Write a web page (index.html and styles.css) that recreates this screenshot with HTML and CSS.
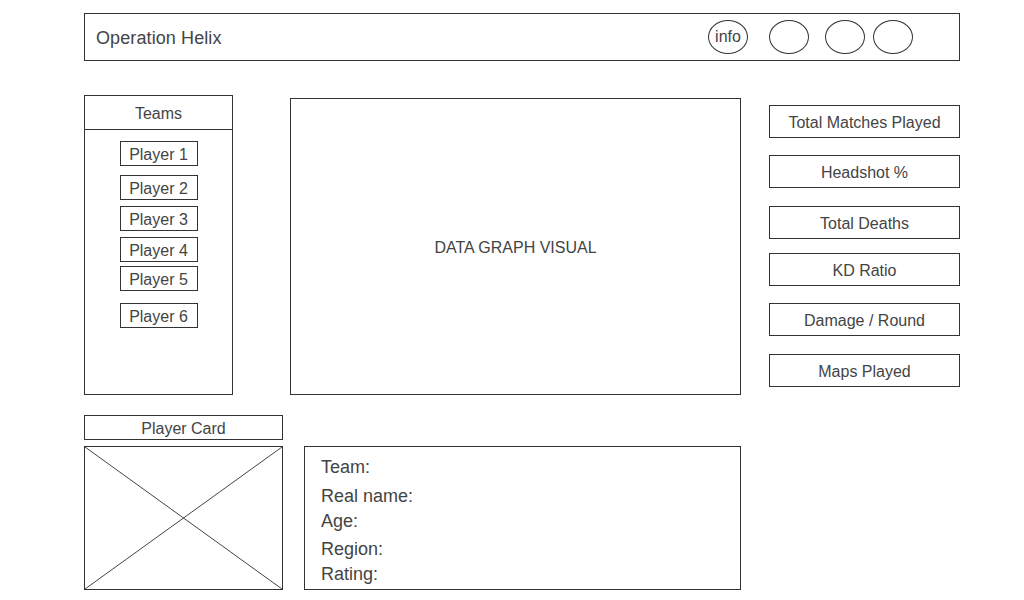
FILE: index.html
```html
<!DOCTYPE html>
<html lang="en">
<head>
<meta charset="utf-8">
<title>Operation Helix</title>
<link rel="stylesheet" href="styles.css">
</head>
<body>
<div class="page">
  <header class="topbar">
    <div class="title">Operation Helix</div>
    <div class="circles">
      <span class="circle c1">info</span>
      <span class="circle c2"></span>
      <span class="circle c3"></span>
      <span class="circle c4"></span>
    </div>
  </header>

  <main class="main-row">
    <section class="teams">
      <div class="teams-head">Teams</div>
      <div class="players">
        <div class="player p1">Player 1</div>
        <div class="player p2">Player 2</div>
        <div class="player p3">Player 3</div>
        <div class="player p4">Player 4</div>
        <div class="player p5">Player 5</div>
        <div class="player p6">Player 6</div>
      </div>
    </section>

    <section class="graph">DATA GRAPH VISUAL</section>

    <section class="stats">
      <div class="stat s1">Total Matches Played</div>
      <div class="stat s2">Headshot %</div>
      <div class="stat s3">Total Deaths</div>
      <div class="stat s4">KD Ratio</div>
      <div class="stat s5">Damage / Round</div>
      <div class="stat s6">Maps Played</div>
    </section>
  </main>

  <section class="bottom-row">
    <div class="card-col">
      <div class="card-label">Player Card</div>
      <div class="card-image">
        <svg class="xsvg" viewBox="0 0 197 142" preserveAspectRatio="none">
          <line x1="0" y1="0" x2="197" y2="142" stroke="#444" stroke-width="1"/>
          <line x1="197" y1="0" x2="0" y2="142" stroke="#444" stroke-width="1"/>
        </svg>
      </div>
    </div>
    <div class="info-box">
      <div class="info-line l1">Team:</div>
      <div class="info-line l2">Real name:</div>
      <div class="info-line l3">Age:</div>
      <div class="info-line l4">Region:</div>
      <div class="info-line l5">Rating:</div>
    </div>
  </section>
</div>
</body>
</html>
```

FILE: styles.css
```css
* { box-sizing: border-box; }

html, body {
  margin: 0;
  padding: 0;
  background: #ffffff;
}

body {
  font-family: "Liberation Sans", Arial, Helvetica, sans-serif;
  color: #444444;
  width: 1024px;
  height: 600px;
  overflow: hidden;
}

.page {
  padding: 13px 0 0 84px;
}

/* header */
.topbar {
  width: 876px;
  height: 48px;
  border: 1px solid #333333;
  display: flex;
  align-items: center;
  padding-left: 11px;
}

.title {
  flex: 1;
  font-size: 18px;
  line-height: 20px;
  margin-top: 2px;
  letter-spacing: 0.1px;
}

.circles {
  display: flex;
  align-items: center;
  margin-right: 46px;
}

.circle {
  width: 40px;
  height: 34px;
  border: 1px solid #333333;
  border-radius: 50%;
  display: flex;
  align-items: center;
  justify-content: center;
  font-size: 16px;
  color: #444444;
}

.c2 { margin-left: 21px; }
.c3 { margin-left: 16px; }
.c4 { margin-left: 8px; }

/* main row */
.main-row {
  display: flex;
  align-items: flex-start;
  margin-top: 34px;
}

.teams {
  width: 149px;
  height: 300px;
  border: 1px solid #333333;
  display: flex;
  flex-direction: column;
}

.teams-head {
  height: 34px;
  padding-top: 2px;
  border-bottom: 1px solid #333333;
  display: flex;
  align-items: center;
  justify-content: center;
  font-size: 16px;
}

.players {
  display: flex;
  flex-direction: column;
  align-items: center;
}

.player {
  width: 78px;
  height: 25px;
  padding-top: 2px;
  border: 1px solid #333333;
  display: flex;
  align-items: center;
  justify-content: center;
  font-size: 16px;
}

.p1 { margin-top: 11px; }
.p2 { margin-top: 9px; }
.p3 { margin-top: 6px; }
.p4 { margin-top: 6px; }
.p5 { margin-top: 4px; }
.p6 { margin-top: 12px; }

.graph {
  width: 451px;
  height: 297px;
  padding-top: 2px;
  margin-top: 3px;
  margin-left: 57px;
  border: 1px solid #333333;
  display: flex;
  align-items: center;
  justify-content: center;
  font-size: 16px;
}

.stats {
  width: 191px;
  margin-left: 28px;
  margin-top: 10px;
  display: flex;
  flex-direction: column;
}

.stat {
  height: 33px;
  padding-top: 2px;
  border: 1px solid #333333;
  display: flex;
  align-items: center;
  justify-content: center;
  font-size: 16px;
}

.s2 { margin-top: 17px; }
.s3 { margin-top: 18px; }
.s4 { margin-top: 14px; }
.s5 { margin-top: 17px; }
.s6 { margin-top: 18px; }

/* bottom row */
.bottom-row {
  display: flex;
  align-items: flex-end;
  margin-top: 20px;
}

.card-col {
  width: 199px;
  display: flex;
  flex-direction: column;
}

.card-label {
  height: 25px;
  padding-top: 2px;
  border: 1px solid #333333;
  display: flex;
  align-items: center;
  justify-content: center;
  font-size: 16px;
}

.card-image {
  margin-top: 6px;
  height: 144px;
  border: 1px solid #333333;
}

.xsvg {
  display: block;
  width: 100%;
  height: 100%;
}

.info-box {
  width: 437px;
  height: 144px;
  margin-left: 21px;
  border: 1px solid #333333;
  padding: 10px 0 0 16px;
}

.info-line {
  font-size: 18px;
  line-height: 20px;
}

.l2 { margin-top: 9px; }
.l3 { margin-top: 5px; }
.l4 { margin-top: 8px; }
.l5 { margin-top: 5px; }
```
